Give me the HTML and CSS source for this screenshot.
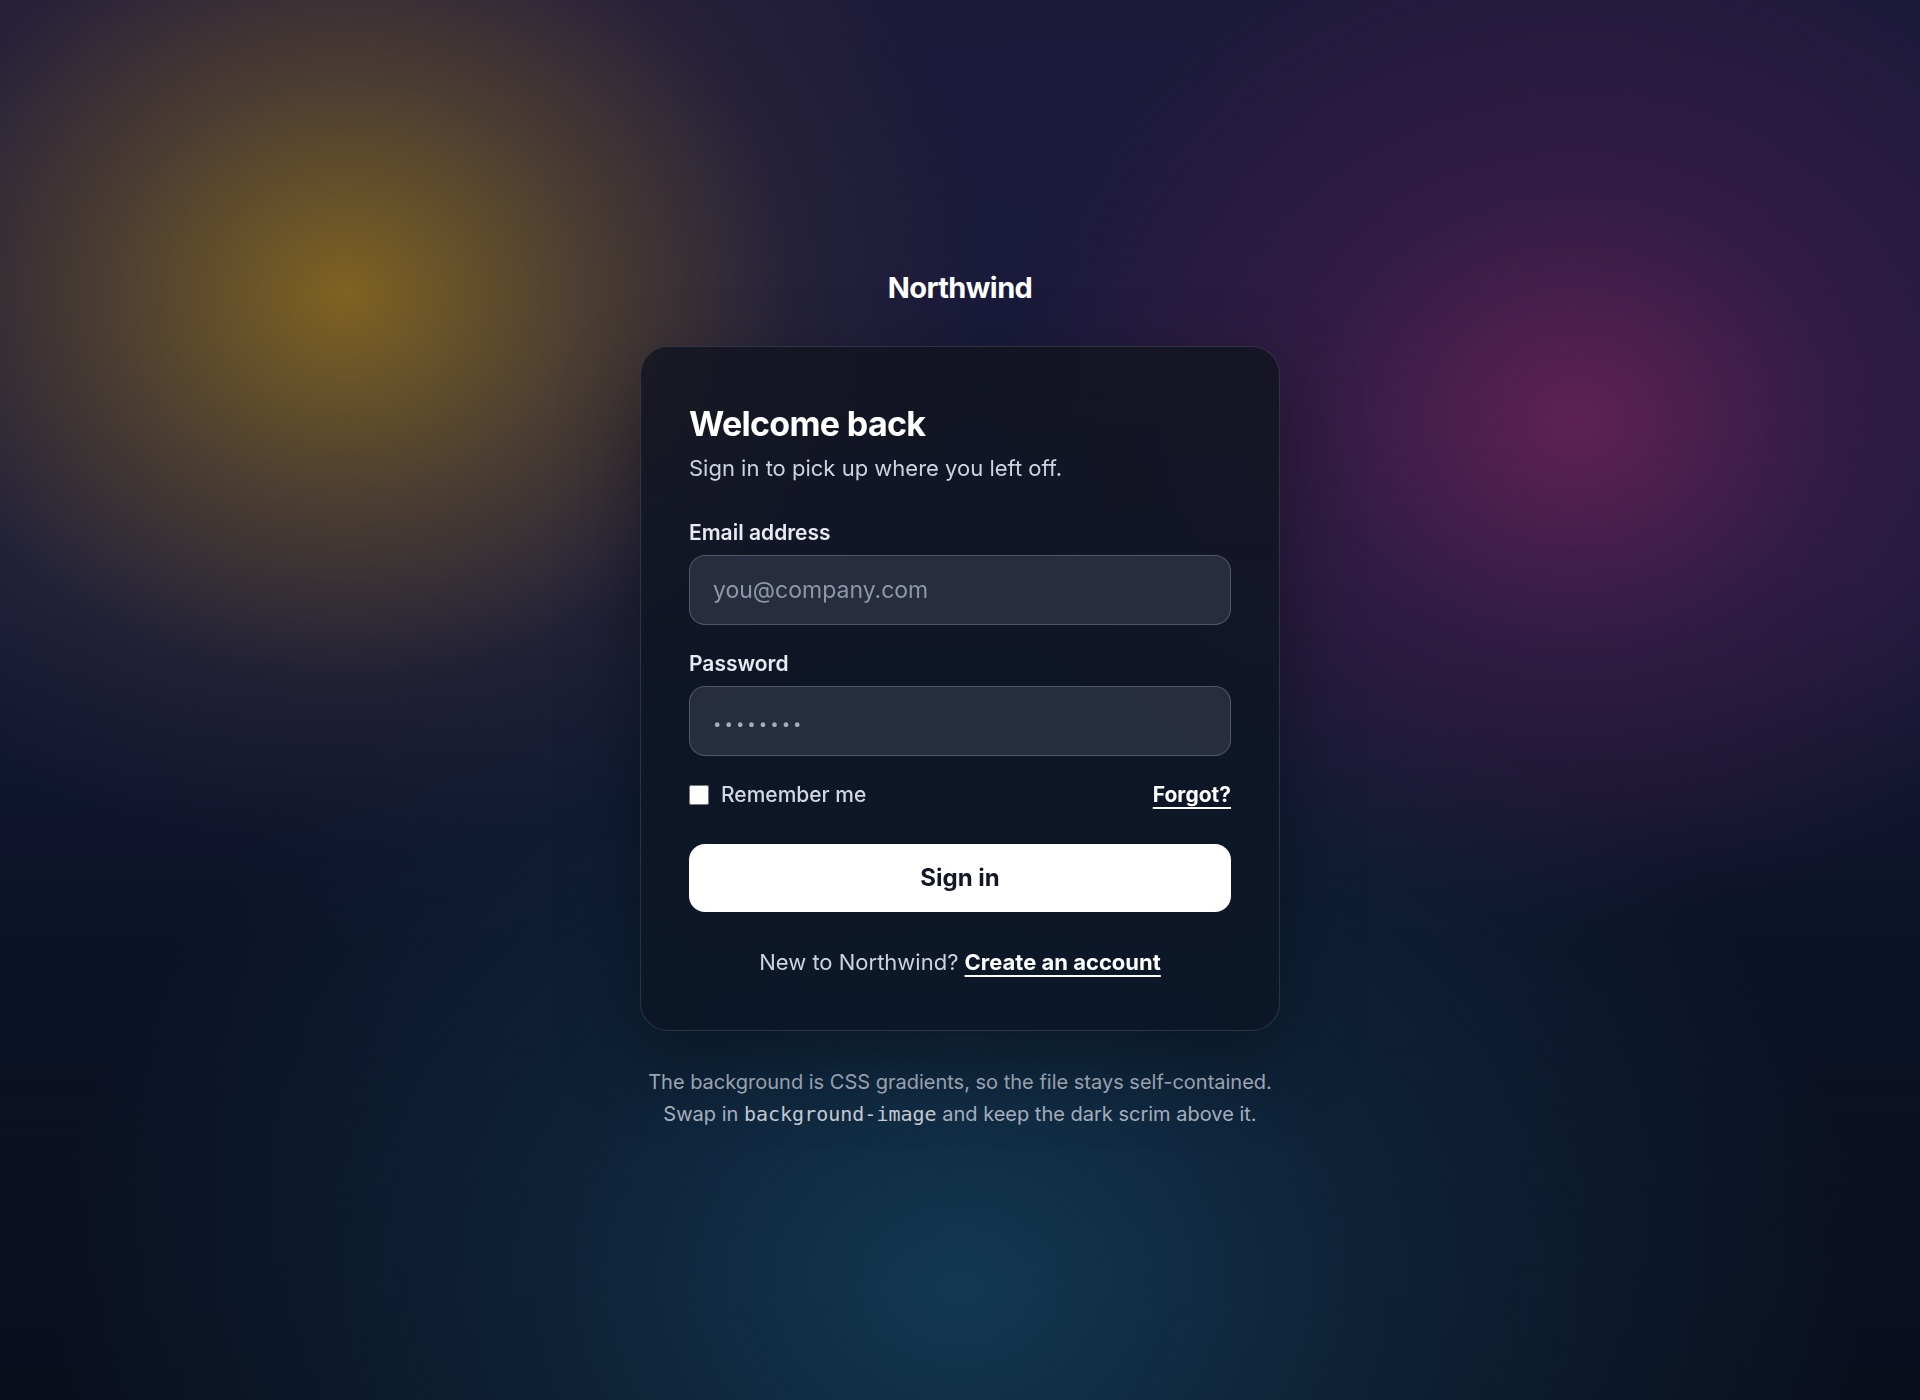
FILE: index.html
```html
<!DOCTYPE html>
<html lang="en">
<head>
  <meta charset="UTF-8">
  <meta name="viewport" content="width=device-width, initial-scale=1.0">
  <title>Sign in · Northwind</title>
  <link rel="stylesheet" href="styles.css">
</head>
<body>

  <main class="page">
    <div class="brand">Northwind</div>

    <form class="card" onsubmit="return false">
      <h1 class="card-title">Welcome back</h1>
      <p class="card-sub">Sign in to pick up where you left off.</p>

      <label class="field">
        <span class="field-label">Email address</span>
        <input class="field-input" type="email" placeholder="you@company.com">
      </label>

      <label class="field">
        <span class="field-label">Password</span>
        <input class="field-input field-pass" type="password" placeholder="••••••••">
      </label>

      <div class="row">
        <label class="remember">
          <input type="checkbox" class="check">
          Remember me
        </label>
        <a href="#" class="link">Forgot?</a>
      </div>

      <button type="submit" class="btn">Sign in</button>

      <p class="signup">New to Northwind? <a href="#" class="link">Create an account</a></p>
    </form>

    <p class="note">
      The background is CSS gradients, so the file stays self-contained.<br>
      Swap in <code>background-image</code> and keep the dark scrim above it.
    </p>
  </main>

</body>
</html>
```

FILE: styles.css
```css
* {
  box-sizing: border-box;
}

html, body {
  margin: 0;
  min-height: 100%;
}

body {
  font-family: Inter, "Noto Sans", sans-serif;
  color: #fff;
  background-color: #0c1122;
  background-image:
    radial-gradient(ellipse 640px 560px at 18% 21%, rgba(135, 105, 32, 0.92) 0, rgba(105, 82, 45, 0.62) 38%, rgba(70, 55, 55, 0.25) 70%, rgba(40, 35, 60, 0) 100%),
    radial-gradient(ellipse 580px 500px at 82% 30%, rgba(100, 34, 86, 0.92) 0, rgba(72, 30, 76, 0.55) 45%, rgba(45, 25, 70, 0) 100%),
    radial-gradient(ellipse 900px 720px at 50% 92%, rgba(20, 58, 84, 0.95) 0, rgba(16, 46, 70, 0.6) 45%, rgba(12, 28, 46, 0) 100%),
    linear-gradient(180deg, #1d1a3a 0%, #161a3a 40%, #0c1226 68%, #0a0f1e 100%);
  background-attachment: fixed;
}

.page {
  min-height: 100vh;
  display: flex;
  flex-direction: column;
  align-items: center;
  justify-content: center;
  padding: 40px 0;
}

.brand {
  font-size: 29px;
  font-weight: 700;
  letter-spacing: -0.02em;
  line-height: 34px;
  margin-bottom: 41px;
}

.card {
  width: 640px;
  padding: 56px 48px 54px;
  border-radius: 28px;
  border: 1px solid rgba(255, 255, 255, 0.13);
  background: linear-gradient(180deg, rgba(18, 20, 32, 0.84), rgba(11, 22, 38, 0.86));
  backdrop-filter: blur(24px);
  box-shadow: 0 30px 80px rgba(0, 0, 0, 0.35);
}

.card-title {
  margin: 0;
  font-size: 34px;
  line-height: 41px;
  font-weight: 700;
  letter-spacing: -0.02em;
}

.card-sub {
  margin: 10px 0 39px;
  font-size: 22px;
  line-height: 28px;
  color: #cdd3e0;
}

.field {
  display: block;
  margin-bottom: 27px;
}

.field-label {
  display: block;
  font-size: 21px;
  line-height: 24px;
  font-weight: 600;
  color: #e8ebf2;
  margin-bottom: 10px;
}

.field-input {
  display: block;
  width: 100%;
  height: 70px;
  padding: 0 23px;
  font-family: inherit;
  font-size: 23px;
  color: #fff;
  background: rgba(50, 56, 74, 0.7);
  border: 1px solid rgba(255, 255, 255, 0.2);
  border-radius: 16px;
  outline: none;
}

.field-input::placeholder {
  color: #8e96a9;
}

.field-pass::placeholder {
  font-size: 15px;
  letter-spacing: 3px;
  color: #a3abbd;
}

.row {
  display: flex;
  align-items: center;
  justify-content: space-between;
  font-size: 21px;
  line-height: 24px;
  margin-bottom: 37px;
}

.remember {
  display: flex;
  align-items: center;
  gap: 12px;
  color: #d2d7e2;
  font-weight: 500;
}

.check {
  width: 20px;
  height: 20px;
  margin: 0;
  border-radius: 4px;
}

.link {
  color: #fff;
  font-weight: 700;
  text-decoration: underline;
  text-underline-offset: 5px;
  text-decoration-thickness: 2px;
}

.btn {
  display: block;
  width: 100%;
  height: 68px;
  border: none;
  border-radius: 16px;
  background: #fff;
  color: #141826;
  font-family: inherit;
  font-size: 24px;
  font-weight: 700;
  cursor: pointer;
}

.btn:hover {
  background: #eef0f5;
}

.signup {
  margin: 36px 0 0;
  text-align: center;
  font-size: 22px;
  line-height: 28px;
  color: #cdd3e0;
}

.note {
  margin: 35px 0 0;
  text-align: center;
  font-size: 20px;
  line-height: 32px;
  color: #aab2c0;
}

.note code {
  font-family: "DejaVu Sans Mono", "Liberation Mono", monospace;
  font-size: 20px;
  color: #c9ced8;
}
```
